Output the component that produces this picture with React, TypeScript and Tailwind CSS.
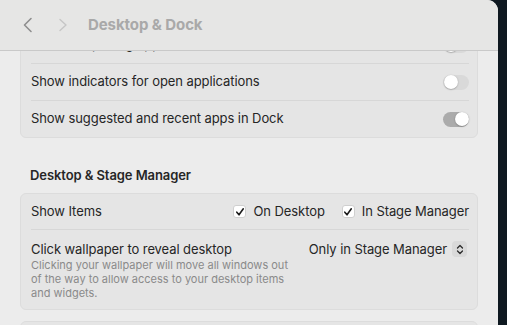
import React from "react";

const font = { fontFamily: "Inter, 'Noto Sans', 'Liberation Sans', sans-serif" };

function Toggle({ on }: { on: boolean }) {
  return (
    <div
      className={`relative w-[26px] h-[15px] rounded-full ${on ? "bg-[#ababab]" : "bg-[#d9d9d9]"}`}
    >
      <div
        className={`absolute top-[0.5px] w-[14px] h-[14px] rounded-full bg-white shadow-[0_0.5px_1.5px_rgba(0,0,0,0.35)] ${on ? "left-[11.5px]" : "left-[0.5px]"}`}
      />
    </div>
  );
}

function Check({ label }: { label: string }) {
  return (
    <div className="flex items-center gap-[7px]">
      <div className="w-[13px] h-[13px] rounded-[3px] bg-white border border-[#cfcfcf] flex items-center justify-center">
        <svg width="10" height="10" viewBox="0 0 10 10">
          <path d="M1.8 5.2 L4 7.8 L8.3 1.8" fill="none" stroke="#1c1c1c" strokeWidth="1.6" strokeLinecap="round" strokeLinejoin="round" />
        </svg>
      </div>
      <span>{label}</span>
    </div>
  );
}

export default function App() {
  return (
    <div className="w-[507px] h-[325px] bg-[#0e1820] flex overflow-hidden text-[13px] tracking-[-0.08px] text-[#262626]" style={font}>
      <div className="relative w-[498px] h-[325px] bg-[#ececec] rounded-tr-[11px] overflow-hidden">
        {/* content */}
        <div className="px-[20px] pt-[26px] flex flex-col">
          <div className="rounded-[6px] border border-[#dcdcdc] bg-[#e5e5e5] pl-[10px] pr-[8px]">
            <div className="h-[37px] flex items-center justify-between border-b border-[#d7d7d7]">
              <span>Animate opening applications</span>
              <Toggle on={false} />
            </div>
            <div className="h-[37px] flex items-center justify-between border-b border-[#d7d7d7]">
              <span>Show indicators for open applications</span>
              <Toggle on={false} />
            </div>
            <div className="h-[36px] flex items-center justify-between">
              <span>Show suggested and recent apps in Dock</span>
              <Toggle on={true} />
            </div>
          </div>

          <div className="mt-[29px] px-[10px] h-[16px] leading-[16px] font-semibold">Desktop &amp; Stage Manager</div>

          <div className="mt-[10px] rounded-[6px] border border-[#dcdcdc] bg-[#e5e5e5] pl-[10px] pr-[8px]">
            <div className="h-[36px] flex items-center justify-between border-b border-[#d7d7d7]">
              <span>Show Items</span>
              <div className="flex items-center gap-[17px]">
                <Check label="On Desktop" />
                <Check label="In Stage Manager" />
              </div>
            </div>
            <div className="flex justify-between pt-[10px] pb-[9px]">
              <div className="flex flex-col">
                <span className="leading-[18px]">Click wallpaper to reveal desktop</span>
                <span className="w-[270px] text-[11px] leading-[14px] tracking-normal text-[#8a8a8a]">
                  Clicking your wallpaper will move all windows out of the way to allow access to your desktop items and widgets.
                </span>
              </div>
              <div className="flex items-start gap-[5px] pt-[1px] pr-[2px]">
                <span className="leading-[16px]">Only in Stage Manager</span>
                <div className="w-[15px] h-[16px] rounded-[4px] bg-[#d9d9d9] flex items-center justify-center">
                  <svg width="8" height="11" viewBox="0 0 8 11">
                    <path d="M1.5 4 L4 1.5 L6.5 4 M1.5 7 L4 9.5 L6.5 7" fill="none" stroke="#2a2a2a" strokeWidth="1.3" strokeLinecap="round" strokeLinejoin="round" />
                  </svg>
                </div>
              </div>
            </div>
          </div>

          <div className="mt-[11px] h-[40px] rounded-[6px] border border-[#dcdcdc] bg-[#e5e5e5]" />
        </div>

        {/* title bar overlay */}
        <div className="absolute top-0 left-0 right-0 h-[51px] bg-[#e6e6e5] border-b border-[#c9c9c9] flex items-center">
          <svg width="12" height="16" viewBox="0 0 12 16" className="ml-[22px]">
            <path d="M9 1.5 L2.5 8 L9 14.5" fill="none" stroke="#8f8f8f" strokeWidth="1.6" strokeLinecap="round" strokeLinejoin="round" />
          </svg>
          <svg width="10" height="14" viewBox="0 0 10 14" className="ml-[24px]">
            <path d="M2 1.5 L8 7 L2 12.5" fill="none" stroke="#c6c6c6" strokeWidth="1.4" strokeLinecap="round" strokeLinejoin="round" />
          </svg>
          <span className="ml-[20px] text-[15px] font-bold text-[#a9a9a9]">Desktop &amp; Dock</span>
        </div>
      </div>
    </div>
  );
}
